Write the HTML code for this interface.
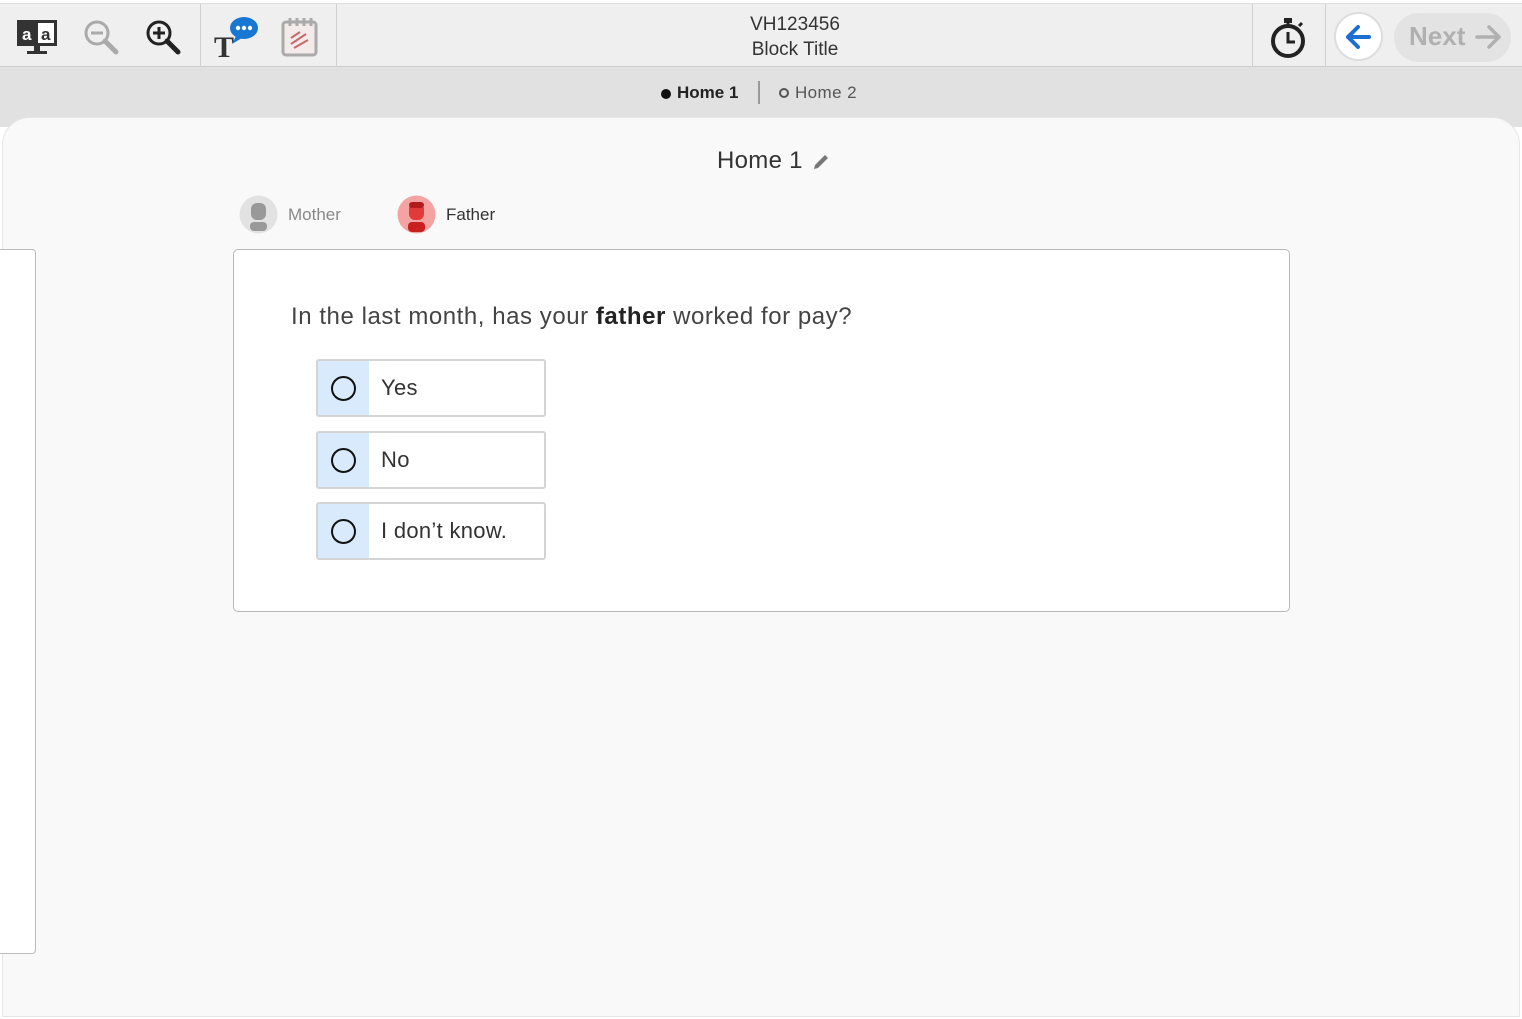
<!DOCTYPE html>
<html><head><meta charset="utf-8"><style>
*{margin:0;padding:0;box-sizing:border-box}
body{width:1522px;height:1019px;background:#fff;font-family:"Liberation Sans",sans-serif;position:relative;overflow:hidden;color:#333}
.tb{position:absolute;left:0;top:3px;width:1522px;height:64px;background:#efefef;border-top:1px solid #ddd;border-bottom:1px solid #ccc}
.sep{position:absolute;top:0;width:1px;height:63px;background:#d0d0d0}
.sub{position:absolute;left:0;top:67px;width:1522px;height:60px;background:#e1e1e1}
.main{position:absolute;left:2px;top:117px;width:1518px;height:900px;background:#f9f9f9;border-radius:28px 28px 0 0;border:1px solid #e6e6e6}
.abs{position:absolute}
.card{position:absolute;left:233px;top:249px;width:1057px;height:363px;background:#fff;border:1px solid #b8b8b8;border-radius:5px}
.opt{position:absolute;left:316px;width:230px;height:58px;border:2px solid #d4d4d4;border-radius:3px;background:#fff}
.opt .l{position:absolute;left:0;top:0;width:51px;height:54px;background:#d9eafc}
.opt .c{position:absolute;left:13px;top:15px;width:25px;height:25px;border:2px solid #111;border-radius:50%}
.opt .t{position:absolute;left:63px;top:14px;font-size:22px;color:#333;letter-spacing:0.3px}
</style></head><body>
<div class="tb">
 <svg class="abs" style="left:16px;top:14px" width="44" height="38" viewBox="0 0 44 38"><rect x="1" y="2" width="40" height="26" fill="#333"/><rect x="22" y="5" width="16" height="20" fill="#fff"/><text x="6" y="22" font-size="17" fill="#fff" font-family="Liberation Sans" font-weight="bold">a</text><text x="25" y="22" font-size="17" fill="#333" font-family="Liberation Sans" font-weight="bold">a</text><rect x="18" y="28" width="6" height="5" fill="#333"/><rect x="11" y="33" width="20" height="3" fill="#333"/></svg>
 <svg class="abs" style="left:82px;top:14px" width="38" height="38" viewBox="0 0 38 38"><circle cx="15" cy="15" r="11" fill="none" stroke="#aaa" stroke-width="3"/><line x1="9" y1="15" x2="21" y2="15" stroke="#aaa" stroke-width="3"/><line x1="23" y1="23" x2="34" y2="34" stroke="#aaa" stroke-width="5" stroke-linecap="round"/></svg>
 <svg class="abs" style="left:144px;top:14px" width="38" height="38" viewBox="0 0 38 38"><circle cx="15" cy="15" r="11" fill="none" stroke="#222" stroke-width="3"/><line x1="9" y1="15" x2="21" y2="15" stroke="#222" stroke-width="3"/><line x1="15" y1="9" x2="15" y2="21" stroke="#222" stroke-width="3"/><line x1="23" y1="23" x2="34" y2="34" stroke="#222" stroke-width="5" stroke-linecap="round"/></svg>
 <div class="sep" style="left:200px"></div>
 <svg class="abs" style="left:212px;top:10px" width="50" height="46" viewBox="0 0 50 46"><text x="2" y="43" font-size="30" font-family="Liberation Serif" font-weight="bold" fill="#333">T</text><ellipse cx="32" cy="14" rx="14" ry="11" fill="#1877d2"/><path d="M24 22 L20 30 L30 24Z" fill="#1877d2"/><circle cx="26" cy="14" r="2.2" fill="#fff"/><circle cx="32" cy="14" r="2.2" fill="#fff"/><circle cx="38" cy="14" r="2.2" fill="#fff"/></svg>
 <svg class="abs" style="left:280px;top:12px" width="40" height="42" viewBox="0 0 40 42"><rect x="3" y="6" width="33" height="33" rx="3" fill="#f3eaea" stroke="#aaa" stroke-width="3"/><line x1="10" y1="2" x2="10" y2="10" stroke="#aaa" stroke-width="3"/><line x1="17" y1="2" x2="17" y2="10" stroke="#aaa" stroke-width="3"/><line x1="24" y1="2" x2="24" y2="10" stroke="#aaa" stroke-width="3"/><line x1="31" y1="2" x2="31" y2="10" stroke="#aaa" stroke-width="3"/><path d="M11 22 L20 16 M11 28 L26 18 M14 32 L28 24" stroke="#c86a6a" stroke-width="2"/></svg>
 <div class="sep" style="left:336px"></div>
 <div class="abs" style="left:700px;width:190px;top:8px;text-align:center;font-size:19px;line-height:25px;color:#333">VH123456<br>Block Title</div>
 <div class="sep" style="left:1252px"></div>
 <svg class="abs" style="left:1268px;top:12px" width="40" height="44" viewBox="0 0 40 44"><circle cx="20" cy="25" r="15" fill="none" stroke="#222" stroke-width="4"/><rect x="16" y="2" width="8" height="5" fill="#222"/><line x1="20" y1="6" x2="20" y2="10" stroke="#222" stroke-width="3"/><line x1="31" y1="10" x2="34" y2="7" stroke="#222" stroke-width="3"/><path d="M20 16 V26 H27" fill="none" stroke="#222" stroke-width="3"/></svg>
 <div class="sep" style="left:1325px"></div>
 <div class="abs" style="left:1334px;top:8px;width:49px;height:49px;border-radius:50%;background:#fff;border:2px solid #ddd"></div>
 <svg class="abs" style="left:1343px;top:18px" width="32" height="30" viewBox="0 0 32 30"><path d="M26 15 H5 M15 5 L5 15 L15 25" fill="none" stroke="#1b6fd1" stroke-width="4" stroke-linecap="round" stroke-linejoin="round"/></svg>
 <div class="abs" style="left:1394px;top:9px;width:117px;height:49px;border-radius:25px;background:#e3e3e3"></div>
 <div class="abs" style="left:1409px;top:17px;font-size:26px;font-weight:bold;color:#b0b0b0">Next</div>
 <svg class="abs" style="left:1474px;top:20px" width="30" height="28" viewBox="0 0 30 28"><path d="M3 13 H25 M15 3 L25 13 L15 23" fill="none" stroke="#b0b0b0" stroke-width="3.5" stroke-linecap="round" stroke-linejoin="round"/></svg>
</div>
<div class="sub"></div>
<div class="abs" style="left:661px;top:89px;width:10px;height:10px;border-radius:50%;background:#111"></div>
<div class="abs" style="left:677px;top:83px;font-size:17px;font-weight:bold;color:#222">Home 1</div>
<div class="abs" style="left:758px;top:81px;width:2px;height:23px;background:#999"></div>
<div class="abs" style="left:779px;top:88px;width:10px;height:10px;border-radius:50%;border:2px solid #555"></div>
<div class="abs" style="left:795px;top:83px;font-size:17px;color:#555;letter-spacing:0.4px">Home 2</div>
<div class="main"></div>
<div class="abs" style="left:0;top:249px;width:36px;height:705px;border:1px solid #bbb;border-left:none;border-radius:0 4px 4px 0;background:#fff"></div>
<div class="abs" style="left:717px;top:147px;font-size:24px;color:#333;letter-spacing:0.3px">Home 1</div>
<svg class="abs" style="left:811px;top:153px" width="20" height="18" viewBox="0 0 20 18"><path d="M3 16 L4 12 L14 2 L17 5 L7 15Z" fill="#777"/></svg>
<svg class="abs" style="left:239px;top:195px" width="39" height="39" viewBox="0 0 39 39"><circle cx="19.5" cy="19.5" r="19" fill="#e2e2e2"/><rect x="12" y="8" width="15" height="17" rx="6" fill="#999"/><rect x="11" y="27" width="17" height="9" rx="4" fill="#999"/></svg>
<div class="abs" style="left:288px;top:205px;font-size:17px;color:#888">Mother</div>
<svg class="abs" style="left:397px;top:195px" width="39" height="39" viewBox="0 0 39 39"><circle cx="19.5" cy="19.5" r="19" fill="#f4a3a3"/><rect x="12" y="8" width="15" height="17" rx="6" fill="#e03a3a"/><rect x="12" y="7" width="15" height="6" rx="3" fill="#b01c1c"/><rect x="11" y="27" width="17" height="10" rx="4" fill="#c81f1f"/></svg>
<div class="abs" style="left:446px;top:205px;font-size:17px;color:#333">Father</div>
<div class="card"></div>
<div class="abs" style="left:291px;top:303px;font-size:24px;color:#444;letter-spacing:0.55px">In the last month, has your <b style="color:#222">father</b> worked for pay?</div>
<div class="opt" style="top:359px"><div class="l"></div><div class="c"></div><div class="t">Yes</div></div>
<div class="opt" style="top:431px"><div class="l"></div><div class="c"></div><div class="t">No</div></div>
<div class="opt" style="top:502px"><div class="l"></div><div class="c"></div><div class="t">I don’t know.</div></div>
</body></html>
